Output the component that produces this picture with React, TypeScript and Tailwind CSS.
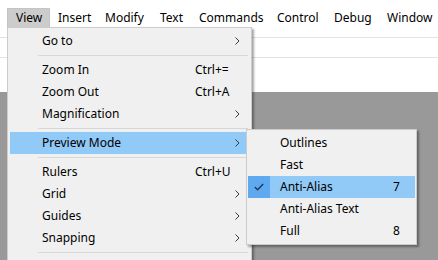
import React from 'react';

const font = { fontFamily: '"Noto Sans", "Open Sans", sans-serif' };

const menuBar = [
  { label: 'View', w: 'w-[43px]', active: true },
  { label: 'Insert', w: 'w-[47px]' },
  { label: 'Modify', w: 'w-[55px]' },
  { label: 'Text', w: 'w-[39px]' },
  { label: 'Commands', w: 'w-[78px]' },
  { label: 'Control', w: 'w-[57px]' },
  { label: 'Debug', w: 'w-[53px]' },
  { label: 'Window', w: 'w-[59px]' },
];

type Item = { label?: string; shortcut?: string; sub?: boolean; active?: boolean; sep?: boolean };

const viewMenu: Item[] = [
  { label: 'Go to', sub: true },
  { sep: true },
  { label: 'Zoom In', shortcut: 'Ctrl+=' },
  { label: 'Zoom Out', shortcut: 'Ctrl+A' },
  { label: 'Magnification', sub: true },
  { sep: true },
  { label: 'Preview Mode', sub: true, active: true },
  { sep: true },
  { label: 'Rulers', shortcut: 'Ctrl+U' },
  { label: 'Grid', sub: true },
  { label: 'Guides', sub: true },
  { label: 'Snapping', sub: true },
  { sep: true },
];

const previewMenu = [
  { label: 'Outlines' },
  { label: 'Fast' },
  { label: 'Anti-Alias', shortcut: '7', checked: true },
  { label: 'Anti-Alias Text' },
  { label: 'Full', shortcut: '8' },
];

function Chevron() {
  return (
    <svg width="5" height="8" viewBox="0 0 5 8" fill="none">
      <path d="M0.5 0.5 L4 4 L0.5 7.5" stroke="#3a3a3a" strokeWidth="1" />
    </svg>
  );
}

function Check() {
  return (
    <svg width="10" height="8" viewBox="0 0 10 8" fill="none">
      <path d="M0.8 4 L3.6 6.8 L9.2 1" stroke="#1d3550" strokeWidth="1.3" />
    </svg>
  );
}

export default function App() {
  return (
    <div className="relative w-[438px] h-[260px] overflow-hidden bg-white text-[12px] text-black" style={font}>
      {/* menu bar */}
      <div className="flex h-[27px] items-end pl-[7px] bg-white">
        {menuBar.map((m) => (
          <div
            key={m.label}
            className={`${m.w} h-[19px] flex items-center pl-[8px] leading-none ${
              m.active ? 'bg-[#cccccc] border border-b-0 border-[#c4c4c4] pl-[7px]' : ''
            }`}
          >
            {m.label}
          </div>
        ))}
      </div>

      {/* document area */}
      <div className="h-[65px] bg-white flex flex-col">
        <div className="h-[10px]" />
        <div className="h-px bg-[#e3e3e3]" />
        <div className="h-[19px]" />
        <div className="h-px bg-[#e3e3e3]" />
      </div>
      <div className="h-[168px] bg-[#999999]" />

      {/* View dropdown */}
      <div className="absolute left-[7px] top-[27px] w-[245px] border border-[#cccccc] bg-[#f0f0f0] p-[2px] shadow-[2px_2px_2px_rgba(0,0,0,0.35)]">
        {viewMenu.map((it, i) =>
          it.sep ? (
            <div key={i} className="h-[7px] flex items-center">
              <div className="ml-[28px] mr-[1px] h-px flex-1 bg-[#d7d7d7]" />
            </div>
          ) : (
            <div
              key={i}
              className={`h-[22px] flex items-center pl-[32px] ${it.active ? 'bg-[#91c9f7]' : ''}`}
            >
              <span className="w-[153px]">{it.label}</span>
              <span className="w-[40px]">{it.shortcut}</span>
              {it.sub && <Chevron />}
            </div>
          )
        )}
        <div className="h-[22px]" />
      </div>

      {/* Preview Mode submenu */}
      <div className="absolute left-[246px] top-[129px] w-[171px] border border-[#cccccc] bg-[#f0f0f0] px-px py-[2px] shadow-[2px_2px_2px_rgba(0,0,0,0.35)]">
        {previewMenu.map((it) => (
          <div key={it.label} className={`h-[22px] flex items-center ${it.checked ? 'bg-[#91c9f7]' : ''}`}>
            <div className={`w-[22px] h-full flex items-center justify-center ${it.checked ? 'bg-[#5fa9f0]' : ''}`}>
              {it.checked && <Check />}
            </div>
            <span className="pl-[10px] w-[123px]">{it.label}</span>
            <span>{it.shortcut}</span>
          </div>
        ))}
      </div>
    </div>
  );
}
